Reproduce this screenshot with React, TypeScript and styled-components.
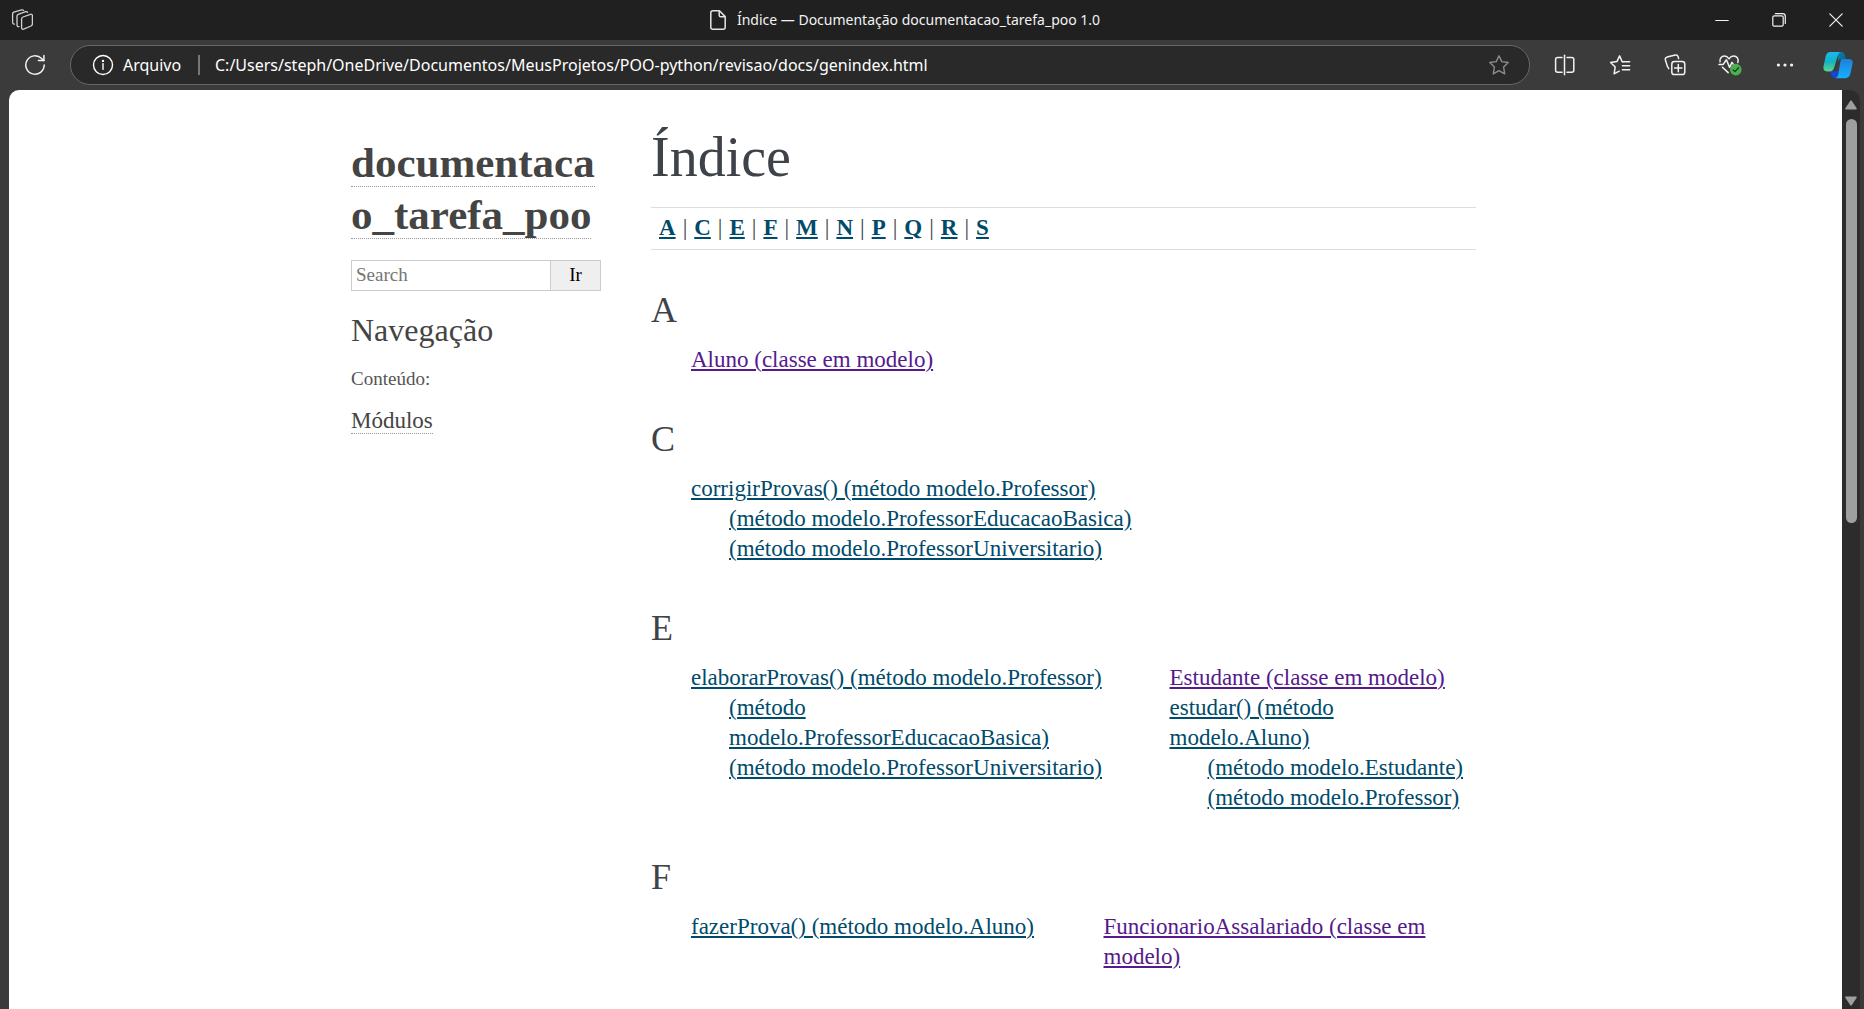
import React from 'react';
import styled, { createGlobalStyle } from 'styled-components';

const serif = '"Liberation Serif", "Times New Roman", serif';
const sans = '"Noto Sans", "Open Sans", sans-serif';

const GlobalStyle = createGlobalStyle`
  *, *::before, *::after { box-sizing: border-box; }
  html, body { margin: 0; padding: 0; background: #3b3b3b; }
  ul, h1, h2, h3, p { margin: 0; padding: 0; }
  ul { list-style: none; }
`;

/* ---------- Browser frame ---------- */

const Window = styled.div`
  display: flex;
  flex-direction: column;
  height: 100vh;
  overflow: hidden;
  background: #3b3b3b;
`;

const TitleBar = styled.header`
  display: flex;
  flex: none;
  height: 40px;
  background: #202020;
  color: #f2f2f2;
`;

const TitleStart = styled.div`
  display: flex;
  align-items: center;
  width: 117px;
  padding-left: 11px;
`;

const WindowTitle = styled.div`
  display: flex;
  flex: 1;
  min-width: 0;
  align-items: center;
  justify-content: center;
  gap: 11px;
  font: 14px/20px ${sans};
  white-space: nowrap;
`;

const IconButton = styled.button<{ $width: number }>`
  display: flex;
  flex: none;
  align-items: center;
  justify-content: center;
  width: ${(p) => p.$width}px;
  height: 40px;
  margin: 0;
  padding: 0;
  border: 0;
  background: transparent;
  color: #f2f2f2;
`;

const Toolbar = styled.div`
  display: flex;
  flex: none;
  align-items: center;
  height: 50px;
`;

const AddressBar = styled.div`
  display: flex;
  flex: 1;
  min-width: 0;
  align-items: center;
  height: 40px;
  margin-right: 7px;
  padding: 0 9px 0 21px;
  border: 1px solid #676767;
  border-radius: 20px;
  background: #292929;
  color: #fff;
  font: 16px/24px ${sans};
`;

const SchemeLabel = styled.label`
  width: 60px;
  margin: 0 15px 0 9px;
`;

const SchemeDivider = styled.span`
  flex: none;
  width: 2px;
  height: 20px;
  margin-right: 15px;
  background: #777;
`;

const AddressInput = styled.input`
  flex: 1;
  min-width: 0;
  height: 24px;
  padding: 0;
  border: 0;
  outline: 0;
  background: transparent;
  color: inherit;
  font: inherit;
`;

const Viewport = styled.div`
  display: flex;
  flex: 1;
  min-height: 0;
  padding: 0 4px 0 9px;
`;

const PageArea = styled.div`
  flex: 1;
  min-width: 0;
  overflow: hidden;
  border-top-left-radius: 10px;
  background: #fff;
`;

const ScrollTrack = styled.div`
  display: flex;
  flex: none;
  flex-direction: column;
  align-items: center;
  width: 18px;
  padding: 10px 0 3px;
  border-top-right-radius: 10px;
  background: #2c2c2c;
`;

const ScrollRail = styled.div`
  flex: 1;
  width: 11px;
  margin: 9px 0;
`;

const ScrollThumb = styled.div`
  height: 46.5%;
  border-radius: 6px;
  background: #9f9f9f;
`;

/* ---------- Documentation page ---------- */

const Document = styled.div`
  display: flex;
  max-width: 1175px;
  margin: 0 auto;
  font-family: ${serif};
`;

const Sidebar = styled.aside`
  flex: none;
  width: 275px;
  padding: 47px 12px 0 13px;
  color: #444;
`;

const ProjectName = styled.h1`
  margin-bottom: 19px;
  font-size: 43px;
  line-height: 52px;
  overflow-wrap: anywhere;
`;

const SidebarLink = styled.a`
  border-bottom: 1px dotted #999;
  color: #444;
  text-decoration: none;
`;

const SearchForm = styled.form`
  display: flex;
  height: 31px;
  margin-bottom: 19px;
`;

const SearchInput = styled.input`
  flex: 1;
  min-width: 0;
  padding: 0 4px 2px;
  border: 1px solid #ccc;
  border-right: 0;
  outline: 0;
  color: #444;
  font: 19px ${serif};
  &::placeholder { color: #757575; opacity: 1; }
`;

const SearchButton = styled.button`
  width: 51px;
  padding: 0 0 2px;
  border: 1px solid #ccc;
  background: #efefef;
  color: #000;
  font: 19px ${serif};
`;

const SidebarHeading = styled.h3`
  margin-bottom: 14px;
  font-size: 32px;
  font-weight: 400;
  line-height: 40px;
`;

const Caption = styled.p`
  margin-bottom: 12px;
  color: #555;
  font-size: 19px;
  line-height: 30px;
`;

const TocItem = styled.li`
  font-size: 23px;
  line-height: 30px;
`;

const Main = styled.main`
  flex: 1;
  min-width: 0;
  padding: 34px 37px 0 38px;
  color: #3e4349;
  font-size: 23px;
  line-height: 30px;
`;

const PageHeading = styled.h1`
  margin-bottom: 17px;
  font-size: 56px;
  font-weight: 400;
  line-height: 66px;
`;

const JumpBox = styled.nav`
  display: flex;
  gap: 7px;
  margin-bottom: 37px;
  padding: 5px 8px 6px;
  border-top: 1px solid #ddd;
  border-bottom: 1px solid #ddd;
`;

const IndexLink = styled.a<{ $visited?: boolean; $bold?: boolean }>`
  color: ${(p) => (p.$visited ? '#551a8b' : '#004b6b')};
  font-weight: ${(p) => (p.$bold ? 700 : 400)};
  text-decoration: underline;
  text-decoration-thickness: 2px;
  text-underline-offset: 2px;
`;

const LetterHeading = styled.h2`
  margin-bottom: 12px;
  font-size: 36px;
  font-weight: 400;
  line-height: 46px;
`;

const LetterGrid = styled.div<{ $columns: string }>`
  display: grid;
  grid-template-columns: ${(p) => p.$columns};
  margin-bottom: 41px;
`;

const EntryList = styled.ul`
  padding-left: 40px;
`;

const SubEntryList = styled.ul`
  padding-left: 38px;
`;

/* ---------- Icons ---------- */

type IconProps = { size?: number; width?: number; color?: string; children: React.ReactNode };

function Icon({ size = 22, width = 1.4, color = 'currentColor', children }: IconProps) {
  return (
    <svg
      width={size}
      height={size}
      viewBox={`0 0 ${size} ${size}`}
      fill="none"
      stroke={color}
      strokeWidth={width}
      strokeLinecap="round"
      strokeLinejoin="round"
      aria-hidden="true"
    >
      {children}
    </svg>
  );
}

const starPath =
  'M11 1.8 13.8 7.6 20.2 8.5 15.6 13 16.7 19.9 11 16.7 5.3 19.9 6.4 13 1.8 8.5 8.2 7.6Z';

const WorkspacesIcon = () => (
  <Icon width={1.3} color="#d0d0d0">
    <path d="M12 8 19.4 5.3Q21.4 4.8 21.4 6.8V14.8Q21.4 16.4 20 17L12.6 20.2Q10.6 20.8 10.6 18.6V10Q10.6 8.5 12 8Z" />
    <path d="M8 17.6Q6 17.8 6 15.8V7Q6 5.8 7.2 5.3L14.6 2.7Q16.1 2.4 16.6 3.4" />
    <path d="M3.4 15.2Q1.6 15.2 1.6 13.4V4.8Q1.7 3.7 2.8 3.2L10.6 .9Q12 .7 12.6 1.4" />
  </Icon>
);

const FileIcon = () => (
  <svg width="16" height="20" viewBox="0 0 16 20" fill="none" stroke="#e4e4e4" strokeWidth="1.5" strokeLinejoin="round" aria-hidden="true">
    <path d="M3 .8H9.4L15.2 6.6V17.2Q15.2 19.2 13.2 19.2H3Q.8 19.2 .8 17.2V2.8Q.8 .8 3 .8Z" />
    <path d="M9.2 1V5.2Q9.2 6.8 10.8 6.8H15" />
  </svg>
);

const RefreshIcon = () => (
  <Icon width={1.5}>
    <path d="M20.2 11A9.2 9.2 0 1 1 17.6 4.6L19.9 6.6" />
    <path d="M19.9 1.4V6.6H14.4" />
  </Icon>
);

const InfoIcon = () => (
  <Icon>
    <circle cx="11" cy="11" r="9.5" />
    <path d="M11 9.6V15.4" />
    <circle cx="11" cy="6.9" r=".5" fill="currentColor" />
  </Icon>
);

const SplitIcon = () => (
  <Icon width={1.5}>
    <path d="M8 3.6H3.6Q1.6 3.6 1.6 5.6V16.2Q1.6 18.2 3.6 18.2H8" />
    <path d="M13 3.6H17.8Q19.8 3.6 19.8 5.6V16.2Q19.8 18.2 17.8 18.2H13" />
    <path d="M10.5 1.2V20.8" />
  </Icon>
);

const FavoritesIcon = () => (
  <Icon width={1.5}>
    <path d="M13.8 7.7H13.2L10.6 1.9 7.9 7.6 1.6 8.5 6.2 13 5.1 19.8 10.2 17.2" />
    <path d="M13.8 7.7H20.6M13.4 11.7H20.6M13.4 15.7H20.6" />
  </Icon>
);

const CollectionsIcon = () => (
  <Icon width={1.5}>
    <rect x="7.8" y="7.6" width="13" height="13" rx="2.6" />
    <path d="M14.3 10.4V17.8M10.6 14.1H18" />
    <path d="M4.8 14.6 3.4 12.4 1.4 6Q.9 3.7 3 3.1L11.4 1.1Q13.6 .9 14.2 2.9L14.6 4.6" />
  </Icon>
);

const HealthIcon = () => (
  <svg width="24" height="22" viewBox="0 0 24 22" fill="none" stroke="currentColor" strokeWidth="1.5" strokeLinecap="round" strokeLinejoin="round" aria-hidden="true">
    <path d="M2 7.8C1.4 4.6 3.6 2 6.4 2 8.6 2 9.9 3.2 11 4.8 12.1 3.2 13.4 2 15.6 2 19 2 21 4.8 19.8 8.6" />
    <path d="M1 10.4H5.2L8.4 5.8 11.6 13.4 14 8.4 15.4 10.4" />
    <path d="M4.4 13.2 10.2 18.6" />
    <circle cx="17.8" cy="15.6" r="5.8" fill="#4caf50" stroke="none" />
    <path d="M15.2 16 17 17.6 20.6 13.8" stroke="#1d3b1e" strokeWidth="1.3" />
  </svg>
);

const MoreIcon = () => (
  <Icon>
    <g fill="currentColor" stroke="none">
      <circle cx="4.4" cy="11" r="1.6" />
      <circle cx="11" cy="11" r="1.6" />
      <circle cx="17.6" cy="11" r="1.6" />
    </g>
  </Icon>
);

const CopilotIcon = () => (
  <svg width="30" height="28" viewBox="0 0 30 28" aria-hidden="true">
    <defs>
      <linearGradient id="copilotLeft" x1="0" y1="0" x2="0" y2="1">
        <stop offset="0" stopColor="#1fb6ee" />
        <stop offset=".5" stopColor="#12b3c4" />
        <stop offset="1" stopColor="#5fd58a" />
      </linearGradient>
      <linearGradient id="copilotRight" x1="0" y1="0" x2="0" y2="1">
        <stop offset="0" stopColor="#1f7fd8" />
        <stop offset="1" stopColor="#16b0ff" />
      </linearGradient>
      <linearGradient id="copilotTop" x1="0" y1="0" x2="1" y2="1">
        <stop offset="0" stopColor="#0a84b4" />
        <stop offset="1" stopColor="#0b5a86" />
      </linearGradient>
    </defs>
    <path d="M15 1H18.5Q21 1 21.8 3.6L23.2 8H18.6Q15.8 8 15 10.6Z" fill="url(#copilotTop)" />
    <path d="M7.4 20.2H13.6L15.6 18 13.6 27.2H12Q9.6 27.2 8.8 24.8Z" fill="#1446d8" />
    <path d="M7.6 1H17.4Q15.6 1.6 14.8 4.4L11 17Q10 20.4 7 20.4H4Q-.4 20.4 .6 15L2.6 5.4Q3.8 1 7.6 1Z" fill="url(#copilotLeft)" />
    <path d="M19 8H26Q30.4 8 29.5 13L27.4 22.6Q26.2 27.2 22.2 27.2H12.6Q14.4 26.4 15.2 23.6L17.4 10.6Q17.8 8.2 19 8Z" fill="url(#copilotRight)" />
  </svg>
);

const Caret = ({ down }: { down?: boolean }) => (
  <svg width="12" height="10" viewBox="0 0 12 10" fill="#9f9f9f" stroke="#9f9f9f" strokeWidth="1.6" strokeLinejoin="round" aria-hidden="true">
    <path d={down ? 'M1 1.2H11L6 8.8Z' : 'M1 8.8H11L6 1.2Z'} />
  </svg>
);

/* ---------- Data ---------- */

type Entry = { text: string; visited?: boolean; children?: string[] };
type Section = { letter: string; columns: string; lists: Entry[][] };

const letters = ['A', 'C', 'E', 'F', 'M', 'N', 'P', 'Q', 'R', 'S'];

const sections: Section[] = [
  {
    letter: 'A',
    columns: '1fr',
    lists: [[{ text: 'Aluno (classe em modelo)', visited: true }]],
  },
  {
    letter: 'C',
    columns: '1fr',
    lists: [
      [
        {
          text: 'corrigirProvas() (método modelo.Professor)',
          children: [
            '(método modelo.ProfessorEducacaoBasica)',
            '(método modelo.ProfessorUniversitario)',
          ],
        },
      ],
    ],
  },
  {
    letter: 'E',
    columns: '58fr 42fr',
    lists: [
      [
        {
          text: 'elaborarProvas() (método modelo.Professor)',
          children: [
            '(método modelo.ProfessorEducacaoBasica)',
            '(método modelo.ProfessorUniversitario)',
          ],
        },
      ],
      [
        { text: 'Estudante (classe em modelo)', visited: true },
        {
          text: 'estudar() (método modelo.Aluno)',
          children: ['(método modelo.Estudante)', '(método modelo.Professor)'],
        },
      ],
    ],
  },
  {
    letter: 'F',
    columns: '1fr 1fr',
    lists: [
      [{ text: 'fazerProva() (método modelo.Aluno)' }],
      [{ text: 'FuncionarioAssalariado (classe em modelo)', visited: true }],
    ],
  },
];

/* ---------- App ---------- */

export default function App() {
  return (
    <Window>
      <GlobalStyle />
      <TitleBar>
        <TitleStart>
          <WorkspacesIcon />
        </TitleStart>
        <WindowTitle>
          <FileIcon />
          <span>Índice — Documentação documentacao_tarefa_poo 1.0</span>
        </WindowTitle>
        <IconButton $width={57} aria-label="Minimizar">
          <Icon size={14} width={1.2}><path d="M.8 7.5H13.2" /></Icon>
        </IconButton>
        <IconButton $width={57} aria-label="Restaurar">
          <Icon size={14} width={1.2}>
            <rect x=".8" y="2.8" width="10.4" height="10.4" rx="1.4" />
            <path d="M3.4.7H10.6Q13.3.7 13.3 3.4V10.4" />
          </Icon>
        </IconButton>
        <IconButton $width={57} aria-label="Fechar">
          <Icon size={14} width={1.2}><path d="M.8.8 13.2 13.2M13.2.8.8 13.2" /></Icon>
        </IconButton>
      </TitleBar>

      <Toolbar>
        <IconButton $width={70} aria-label="Atualizar"><RefreshIcon /></IconButton>
        <AddressBar>
          <InfoIcon />
          <SchemeLabel htmlFor="address">Arquivo</SchemeLabel>
          <SchemeDivider />
          <AddressInput
            id="address"
            type="text"
            defaultValue="C:/Users/steph/OneDrive/Documentos/MeusProjetos/POO-python/revisao/docs/genindex.html"
          />
          <IconButton $width={42} aria-label="Adicionar aos favoritos">
            <Icon color="#8c8c8c"><path d={starPath} /></Icon>
          </IconButton>
        </AddressBar>
        <IconButton $width={55} aria-label="Dividir tela"><SplitIcon /></IconButton>
        <IconButton $width={55} aria-label="Favoritos"><FavoritesIcon /></IconButton>
        <IconButton $width={55} aria-label="Coleções"><CollectionsIcon /></IconButton>
        <IconButton $width={55} aria-label="Desempenho"><HealthIcon /></IconButton>
        <IconButton $width={55} aria-label="Mais"><MoreIcon /></IconButton>
        <IconButton $width={52} aria-label="Copilot"><CopilotIcon /></IconButton>
      </Toolbar>

      <Viewport>
        <PageArea>
          <Document>
            <Sidebar>
              <ProjectName>
                <SidebarLink href="#inicio">documentacao_tarefa_poo</SidebarLink>
              </ProjectName>
              <SearchForm>
                <SearchInput type="text" placeholder="Search" aria-label="Search" />
                <SearchButton type="button">Ir</SearchButton>
              </SearchForm>
              <SidebarHeading>Navegação</SidebarHeading>
              <Caption>Conteúdo:</Caption>
              <ul>
                <TocItem><SidebarLink href="#modulos">Módulos</SidebarLink></TocItem>
              </ul>
            </Sidebar>

            <Main>
              <PageHeading>Índice</PageHeading>
              <JumpBox>
                {letters.map((letter, i) => (
                  <React.Fragment key={letter}>
                    {i > 0 && <span>|</span>}
                    <IndexLink $bold href={`#${letter}`}>{letter}</IndexLink>
                  </React.Fragment>
                ))}
              </JumpBox>
              {sections.map((section) => (
                <section key={section.letter} id={section.letter}>
                  <LetterHeading>{section.letter}</LetterHeading>
                  <LetterGrid $columns={section.columns}>
                    {section.lists.map((entries, i) => (
                      <EntryList key={i}>
                        {entries.map((entry) => (
                          <li key={entry.text}>
                            <IndexLink $visited={entry.visited} href="#modelo">{entry.text}</IndexLink>
                            {entry.children && (
                              <SubEntryList>
                                {entry.children.map((child) => (
                                  <li key={child}><IndexLink href="#modelo">{child}</IndexLink></li>
                                ))}
                              </SubEntryList>
                            )}
                          </li>
                        ))}
                      </EntryList>
                    ))}
                  </LetterGrid>
                </section>
              ))}
            </Main>
          </Document>
        </PageArea>
        <ScrollTrack>
          <Caret />
          <ScrollRail><ScrollThumb /></ScrollRail>
          <Caret down />
        </ScrollTrack>
      </Viewport>
    </Window>
  );
}
